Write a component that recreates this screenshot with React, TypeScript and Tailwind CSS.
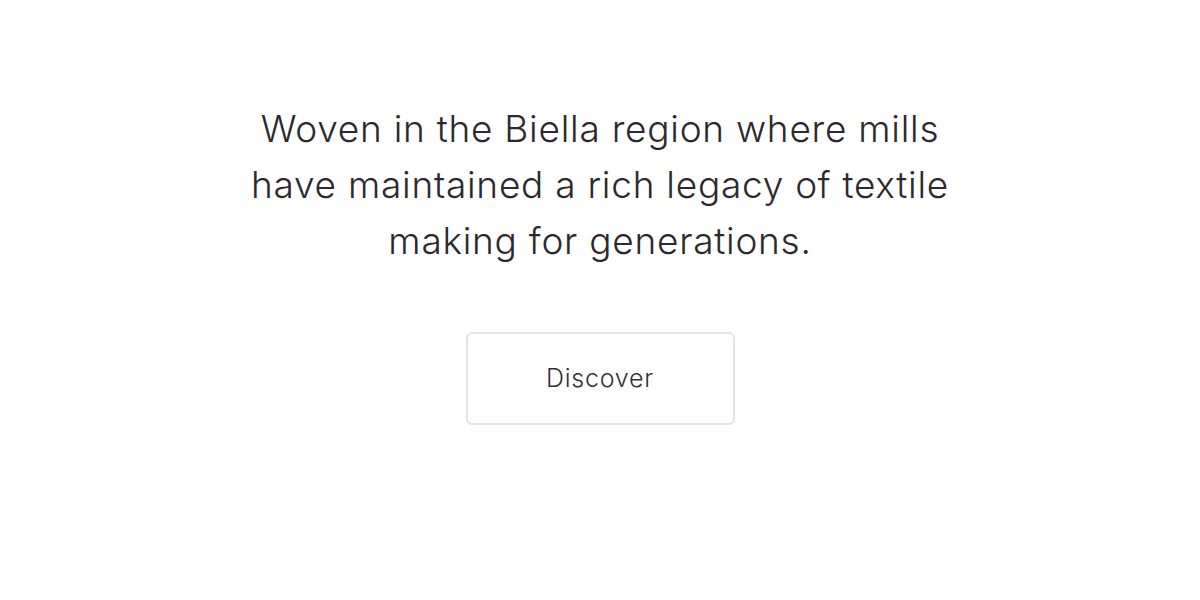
export default function App() {
  return (
    <div className="w-[1200px] h-[600px] bg-white flex flex-col items-center pt-[101px] font-['Inter',sans-serif] text-[#2b292d]">
      <p className="w-[730px] text-center text-[37px] leading-[56px] font-light tracking-[0.02em]">
        Woven in the Biella region where mills have maintained a rich legacy of textile making for generations.
      </p>
      <button className="mt-[63px] w-[269px] h-[93px] border-2 border-[#e4e3e6] rounded-[6px] text-[25px] font-light tracking-[0.03em] text-[#333136]">
        Discover
      </button>
    </div>
  );
}
